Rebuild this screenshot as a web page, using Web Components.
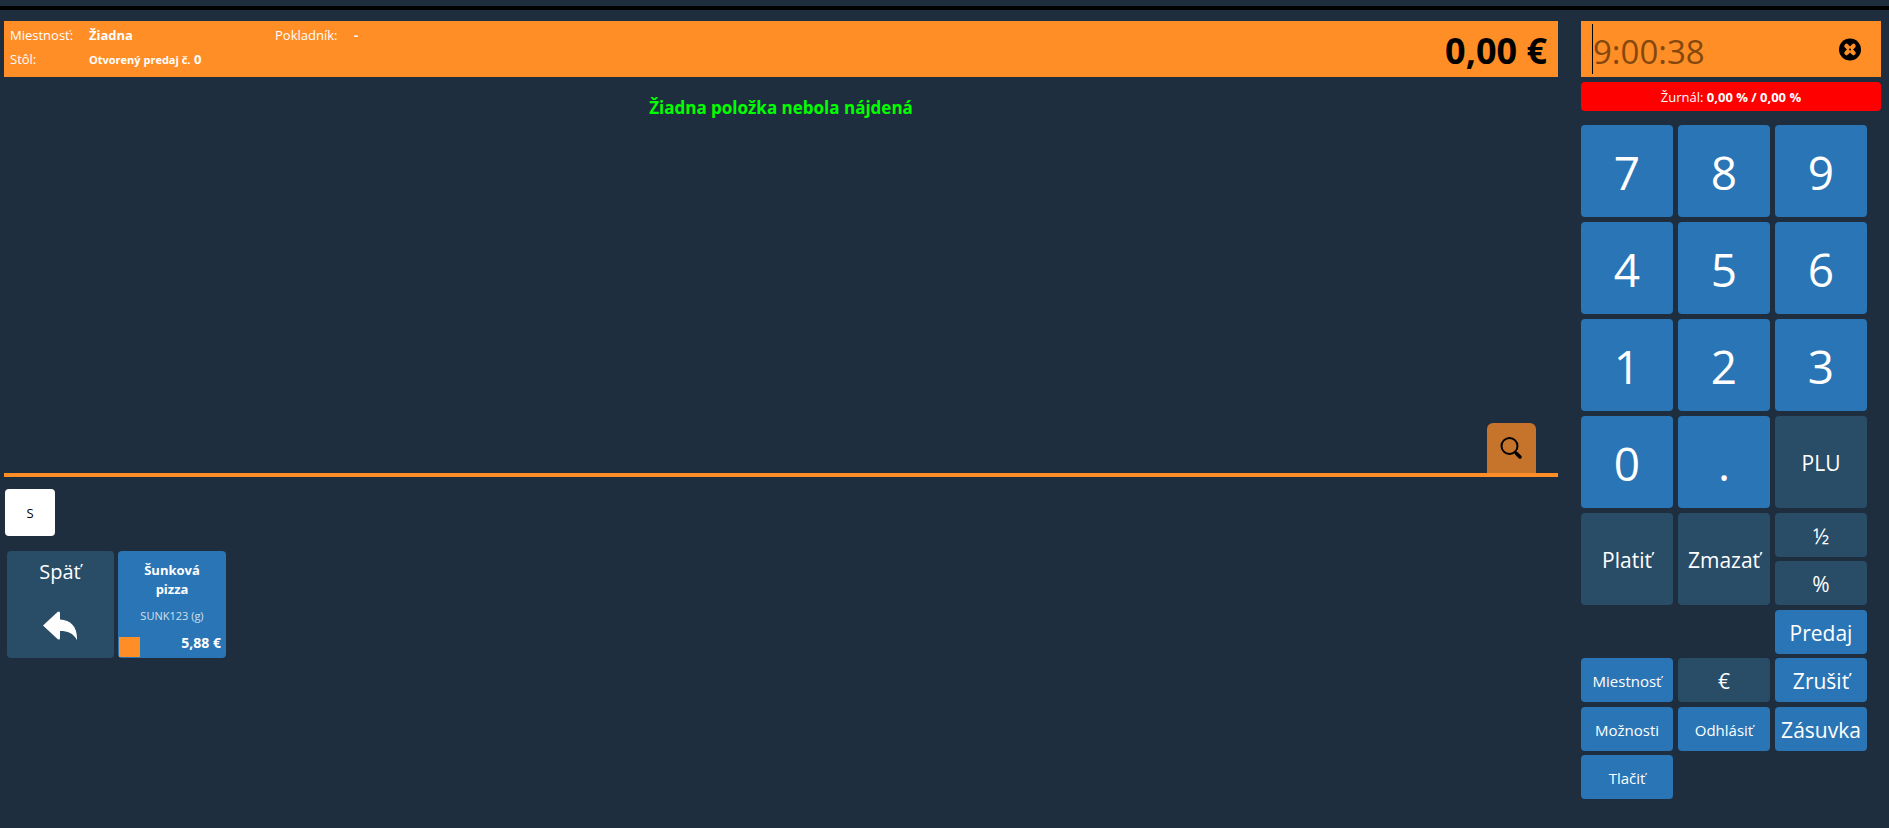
<!DOCTYPE html>
<html lang="sk">
<head>
<meta charset="utf-8">
<meta name="viewport" content="width=device-width, initial-scale=1">
<title>Pokladňa</title>
<style>
  :root {
    --bg: #1e2e3e;
    --orange: #ff8e26;
    --blue: #2a75b5;
    --slate: #294c67;
  }
  html, body { margin: 0; min-height: 100%; background: var(--bg); }
  body { font: 14px/20px "Open Sans", "Noto Sans", sans-serif; color: #fff; }
</style>
</head>
<body>
<pos-app></pos-app>

<script>
  const define = (name, html, setup) => {
    const template = document.createElement('template');
    template.innerHTML = `<style>*{box-sizing:border-box}button{font:inherit;color:inherit;border:0;margin:0;padding:0;cursor:pointer}</style>${html}`;
    customElements.define(name, class extends HTMLElement {
      constructor() {
        super();
        this.attachShadow({ mode: 'open' }).append(template.content.cloneNode(true));
        if (setup) setup(this.shadowRoot, this);
      }
    });
  };

  define('pos-key', `
    <style>
      :host { display: block; height: 44px; font-size: 21px; line-height: 28px; }
      :host([tall]) { height: 92px; }
      :host([digit]) { font-size: 46px; line-height: 60px; }
      :host([small]) { font-size: 15px; line-height: 20px; }
      button { width: 100%; height: 100%; padding-top: 2px; border-radius: 4px; background: var(--blue); white-space: nowrap; }
      :host([muted]) button { background: var(--slate); }
    </style>
    <button type="button"><slot></slot></button>`);

  define('sale-header', `
    <style>
      :host { display: flex; justify-content: space-between; height: 56px; padding: 2px 11px 0 6px; background: var(--orange); }
      dl { display: grid; grid-template-columns: 79px 186px 79px auto; grid-auto-rows: 24px; margin: 0; font-size: 13px; line-height: 24px; white-space: nowrap; }
      dt { grid-column: 1; }
      dt.wide { grid-column: 3; }
      dd { margin: 0; font-weight: 700; }
      small { font-size: 11px; }
      output { font-size: 36px; line-height: 56px; font-weight: 700; color: #000; }
    </style>
    <dl>
      <dt>Miestnosť:</dt><dd>Žiadna</dd>
      <dt class="wide">Pokladník:</dt><dd>-</dd>
      <dt>Stôl:</dt><dd><small>Otvorený predaj č.</small> 0</dd>
    </dl>
    <output>0,00 €</output>`);

  define('sale-items', `
    <style>
      :host { display: flex; flex-direction: column; justify-content: space-between; align-items: center; min-height: 400px; border-bottom: 4px solid var(--orange); padding-top: 19px; }
      p { margin: 0; font-size: 17px; line-height: 24px; font-weight: 700; color: #0f0; }
      button { align-self: flex-end; display: grid; place-items: center; width: 49px; height: 50px; margin-right: 22px; padding-right: 2px; border-radius: 6px 6px 0 0; background: #c6742b; }
      svg { display: block; width: 24px; height: 24px; }
    </style>
    <p>Žiadna položka nebola nájdená</p>
    <button type="button" aria-label="Hľadať">
      <svg viewBox="0 0 24 24" fill="none" stroke="#000" stroke-linecap="round">
        <circle cx="10.500" cy="10" r="8" stroke-width="2"/>
        <path d="M16 16l1.200 1.200" stroke-width="2.500"/>
        <path d="M17.500 17.500l3.500 3.500" stroke-width="3.500"/>
      </svg>
    </button>`);

  define('product-tile', `
    <style>
      :host { display: block; width: 108px; height: 107px; }
      button { display: flex; flex-direction: column; align-items: center; width: 100%; height: 100%; padding: 10px 1px 1px; border-radius: 4px; background: var(--blue); }
      .name { width: 72px; font-size: 13px; line-height: 19px; font-weight: 700; }
      .code { margin-top: 8px; font-size: 11px; line-height: 18px; color: #cfe0ee; }
      .foot { display: flex; justify-content: space-between; width: 100%; margin-top: auto; padding-right: 4px; font-size: 14px; line-height: 12px; font-weight: 700; }
      .mark { width: 21px; height: 20px; background: var(--orange); }
    </style>
    <button type="button">
      <span class="name"><slot name="name"></slot></span>
      <span class="code"><slot name="code"></slot></span>
      <span class="foot"><span class="mark"></span><slot name="price"></slot></span>
    </button>`);

  define('back-tile', `
    <style>
      :host { display: block; width: 107px; height: 107px; }
      button { display: flex; flex-direction: column; align-items: center; gap: 25px; width: 100%; height: 100%; padding: 7px 1px 0 0; border-radius: 4px; background: var(--slate); font-size: 20px; line-height: 28px; }
      svg { display: block; width: 36px; height: 30px; }
    </style>
    <button type="button">
      <slot></slot>
      <svg viewBox="0 0 36 30" fill="#fff"><path d="M1 14.500 15.500 1q2.500-1.500 2.500 1v6.500C29 9 35.500 16 35 29c-4-7-9-9-17-9v7q0 2.500-2.500 1Z"/></svg>
    </button>`);

  define('product-browser', `
    <style>
      :host { display: block; padding: 12px 1px 0; }
      .letter { display: block; width: 50px; height: 47px; border-radius: 4px; background: #fff; color: #000; font-size: 13px; line-height: 20px; }
      .tiles { display: flex; flex-wrap: wrap; gap: 4px; padding: 15px 2px 0; }
    </style>
    <button class="letter" type="button">S</button>
    <div class="tiles">
      <back-tile>Späť</back-tile>
      <product-tile>
        <span slot="name">Šunková pizza</span>
        <span slot="code">SUNK123 (g)</span>
        <span slot="price">5,88 €</span>
      </product-tile>
    </div>`);

  define('entry-field', `
    <style>
      :host { display: flex; align-items: center; height: 56px; padding: 0 19px 0 11px; background: var(--orange); }
      .caret { flex: none; width: 1px; height: 50px; background: #000; }
      input { flex: 1; min-width: 0; height: 56px; margin: 0; padding: 4px 0 0; border: 0; outline: 0; background: none; color: #000; font: 33px/50px "Open Sans", "Noto Sans", sans-serif; }
      input::placeholder { color: #84480f; opacity: 1; }
      button { flex: none; display: block; background: none; }
      svg { display: block; width: 24px; height: 24px; }
    </style>
    <span class="caret"></span>
    <input type="text" placeholder="9:00:38" aria-label="Zadanie">
    <button type="button" aria-label="Vymazať">
      <svg viewBox="0 0 24 24"><circle cx="12" cy="12.500" r="11" fill="#000"/><path d="M8.500 9l7 7M15.500 9l-7 7" stroke="#ff8e26" stroke-width="4.500" stroke-linecap="round"/><circle cx="12" cy="12.500" r="1" fill="#000"/></svg>
    </button>`);

  define('journal-status', `
    <style>
      :host { display: block; height: 29px; border-radius: 4px; background: #f00; text-align: center; font-size: 13px; line-height: 31px; }
    </style>
    Žurnál: <b>0,00 % / 0,00 %</b>`);

  define('key-pad', `
    <style>
      :host { display: flex; flex-direction: column; gap: 5px; width: 286px; }
      div { display: grid; grid-template-columns: repeat(3, 1fr); column-gap: 5px; row-gap: 4px; }
      .digits { row-gap: 5px; }
      [tall] { grid-row: span 2; }
      .digits [tall] { grid-row: auto; }
      .third { grid-column: 3; }
    </style>
    <div class="digits">
      <pos-key tall digit>7</pos-key><pos-key tall digit>8</pos-key><pos-key tall digit>9</pos-key>
      <pos-key tall digit>4</pos-key><pos-key tall digit>5</pos-key><pos-key tall digit>6</pos-key>
      <pos-key tall digit>1</pos-key><pos-key tall digit>2</pos-key><pos-key tall digit>3</pos-key>
      <pos-key tall digit>0</pos-key><pos-key tall digit>.</pos-key><pos-key tall muted>PLU</pos-key>
    </div>
    <div>
      <pos-key tall muted>Platiť</pos-key><pos-key tall muted>Zmazať</pos-key>
      <pos-key muted>½</pos-key><pos-key muted>%</pos-key>
    </div>
    <div>
      <pos-key class="third">Predaj</pos-key>
      <pos-key small>Miestnosť</pos-key><pos-key muted>€</pos-key><pos-key>Zrušiť</pos-key>
    </div>
    <div>
      <pos-key small>Možnosti</pos-key><pos-key small>Odhlásiť</pos-key><pos-key>Zásuvka</pos-key>
      <pos-key small>Tlačiť</pos-key>
    </div>`);

  define('pos-app', `
    <style>
      :host { display: block; padding-top: 6px; }
      .bar { height: 4px; background: #000; }
      .layout { display: flex; align-items: flex-start; gap: 23px; padding: 11px 8px 0 4px; }
      main { flex: 1; min-width: 0; }
      aside { flex: none; width: 300px; }
      journal-status { margin: 5px 0 14px; }
    </style>
    <div class="bar"></div>
    <div class="layout">
      <main>
        <sale-header></sale-header>
        <sale-items></sale-items>
        <product-browser></product-browser>
      </main>
      <aside>
        <entry-field></entry-field>
        <journal-status></journal-status>
        <key-pad></key-pad>
      </aside>
    </div>`);
</script>
</body>
</html>
